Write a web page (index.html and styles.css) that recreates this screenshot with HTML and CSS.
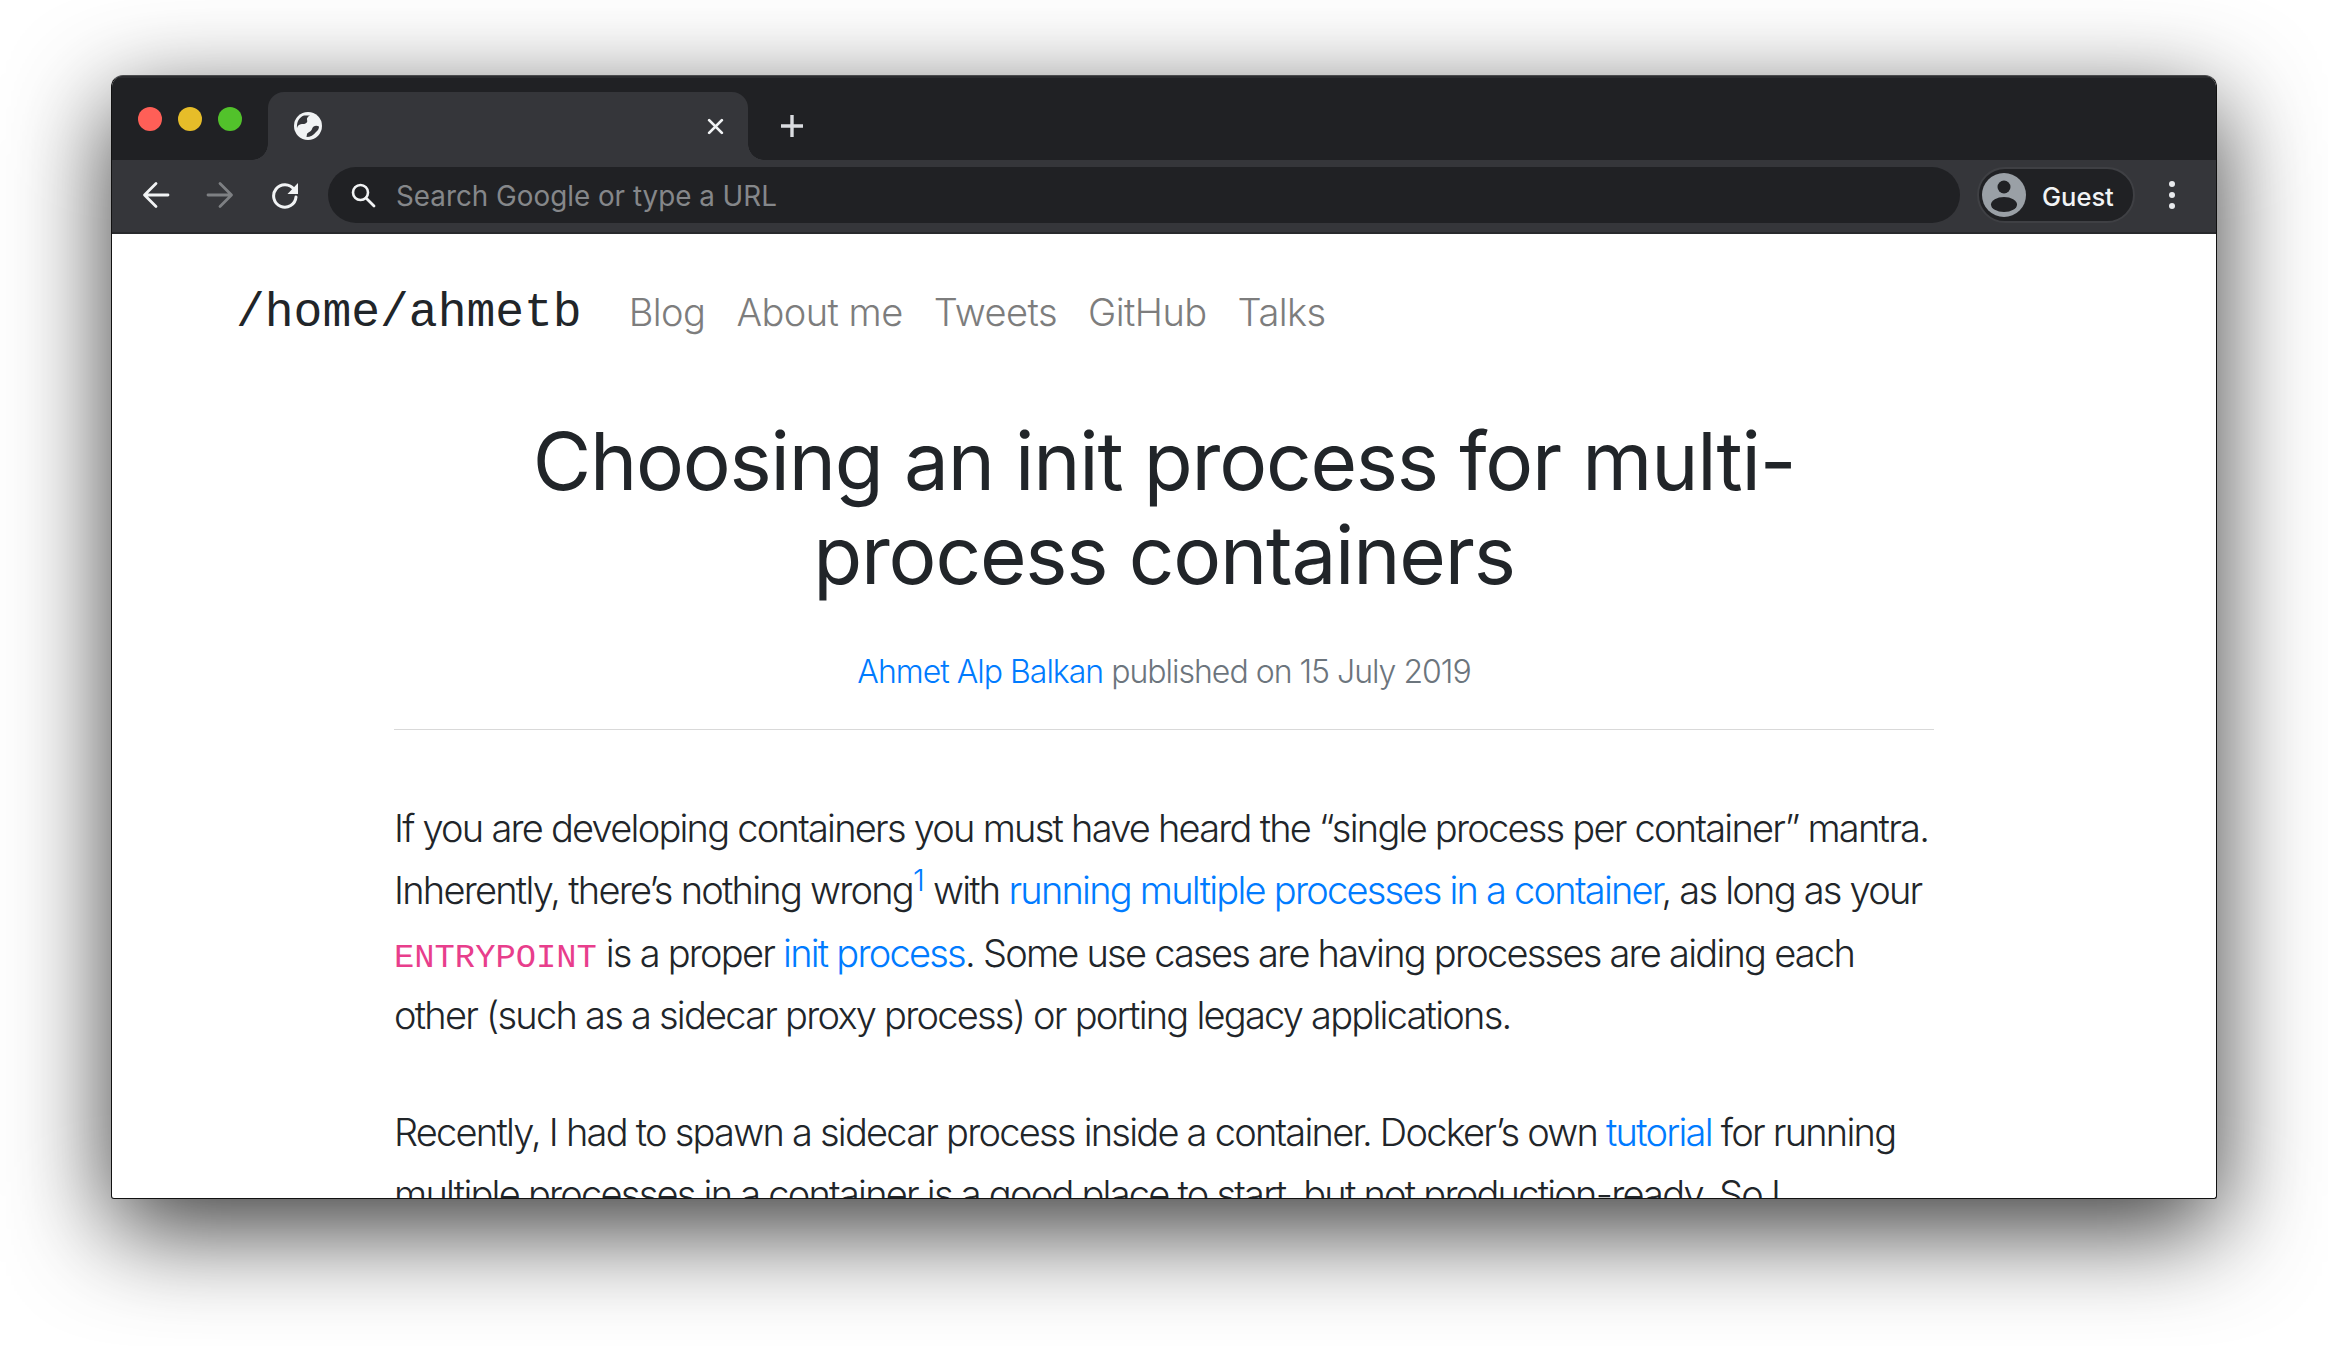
FILE: index.html
```html
<!DOCTYPE html>
<html lang="en">
<head>
<meta charset="utf-8">
<title>Choosing an init process for multi-process containers</title>
<link rel="stylesheet" href="styles.css">
</head>
<body>
<div class="window">
  <header class="tabstrip">
    <div class="lights">
      <span class="light red"></span><span class="light yellow"></span><span class="light green"></span>
    </div>
    <div class="tab">
      <svg class="globe" width="28" height="28" viewBox="0 0 28 28"><circle cx="14" cy="14" r="14" fill="#f1f3f4"/><path fill="#35363a" d="M3 16.500C3.500 13 6 12 9 12c3 0 5-2 4-4-.5-2 1-3.500 3-4.500l-6 0C5 5.500 2.500 10 3 16.500zM25 14.500c-3-1.500-6-.5-7 2.500-.5 2.500-4 3-5 5l-.5 3c3.500 0 7.500-2 9.500-5 2-1.500 3-3.500 3-5.500z"/></svg>
      <svg class="close" width="17" height="17" viewBox="0 0 16 16"><path stroke="#f1f3f4" stroke-width="2.600" stroke-linecap="round" d="M2 2l12 12M14 2L2 14"/></svg>
    </div>
    <svg class="plus" width="24" height="24" viewBox="0 0 24 24"><path stroke="#dadce0" stroke-width="3.400" d="M12 1v22M1 12h22"/></svg>
  </header>
  <nav class="toolbar">
    <svg class="tool first" width="30" height="30" viewBox="0 0 30 30"><path fill="none" stroke="#f1f3f4" stroke-width="2.800" stroke-linecap="round" stroke-linejoin="round" d="M27 15H4M15 3.500L3.500 15 15 26.500"/></svg>
    <svg class="tool" width="30" height="30" viewBox="0 0 30 30"><path fill="none" stroke="#7e8083" stroke-width="2.800" stroke-linecap="round" stroke-linejoin="round" d="M3 15h23M15 3.500L26.500 15 15 26.500"/></svg>
    <svg class="tool" width="30" height="30" viewBox="0 0 30 30"><path fill="none" stroke="#f1f3f4" stroke-width="3" stroke-linecap="round" d="M24 9.500A11.200 11.200 0 1 0 26 17"/><path fill="#f1f3f4" d="M28 3v11H17.500z"/></svg>
    <div class="omnibox">
      <svg width="26" height="26" viewBox="0 0 26 26"><circle cx="10.500" cy="10.500" r="7.500" fill="none" stroke="#f1f3f4" stroke-width="2.600"/><path stroke="#f1f3f4" stroke-width="2.800" stroke-linecap="round" d="M16 16l8 8"/></svg>
      <span class="placeholder">Search Google or type a URL</span>
    </div>
    <div class="profile">
      <svg width="44" height="44" viewBox="0 0 44 44"><circle cx="22" cy="22" r="22" fill="#9aa0a6"/><circle cx="22" cy="14" r="6.500" fill="#202124"/><ellipse cx="22" cy="31.500" rx="13" ry="7.500" fill="#202124"/></svg>
      <span class="guest">Guest</span>
    </div>
    <div class="menu"><span class="dot"></span><span class="dot"></span><span class="dot"></span></div>
  </nav>
  <main class="page">
    <div class="site">
      <a class="brand">/home/ahmetb</a>
      <a class="navlink">Blog</a>
      <a class="navlink">About me</a>
      <a class="navlink">Tweets</a>
      <a class="navlink">GitHub</a>
      <a class="navlink">Talks</a>
    </div>
    <article class="post">
      <h1 class="title">Choosing an init process for multi-<br>process containers</h1>
      <p class="meta"><a class="link">Ahmet Alp Balkan</a> published on 15 July 2019</p>
      <hr class="rule">
      <p class="para">If you are developing containers you must have heard the “single process per container” mantra.<br>Inherently, there’s nothing wrong<sup class="fn">1</sup> with <a class="link">running multiple processes in a container</a>, as long as your<br><code class="code">ENTRYPOINT</code> is a proper <a class="link">init process</a>. Some use cases are having processes are aiding each<br>other (such as a sidecar proxy process) or porting legacy applications.</p>
      <p class="para">Recently, I had to spawn a sidecar process inside a container. Docker’s own <a class="link">tutorial</a> for running<br>multiple processes in a container is a good place to start, but not production-ready. So I</p>
    </article>
  </main>
</div>
</body>
</html>
```
FILE: styles.css
```css
* { box-sizing: border-box; }
html, body { margin: 0; height: 100%; }
body {
  background: #fff;
  padding: 75px 111px 0;
  overflow: hidden;
  font-family: Inter, "Liberation Sans", sans-serif;
}
.window {
  width: 2106px;
  height: 1124px;
  display: flex;
  flex-direction: column;
  background: #fff;
  border: 1px solid #111;
  border-top-color: #4a4b4d;
  border-radius: 12px 12px 3px 3px;
  box-shadow: 0 30px 100px 0 rgba(0, 0, 0, .78);
  overflow: hidden;
}
.tabstrip {
  height: 84px;
  flex: none;
  background: #202124;
  border-top: 2px solid #2a2b2e;
  display: flex;
  align-items: flex-end;
  padding-left: 156px;
}
.lights {
  display: flex;
  gap: 16px;
  margin: 0 0 29px -130px;
  width: 130px;
  flex: none;
}
.light { width: 24px; height: 24px; border-radius: 50%; flex: none; }
.red { background: #ff5f57; }
.yellow { background: #e6bd29; }
.green { background: #52c22b; }
.tab {
  position: relative;
  width: 480px;
  height: 68px;
  background: #35363a;
  border-radius: 16px 16px 0 0;
  display: flex;
  align-items: center;
  justify-content: space-between;
  padding: 0 24px 0 26px;
  flex: none;
}
.tab::before, .tab::after {
  content: "";
  position: absolute;
  bottom: 0;
  width: 16px;
  height: 16px;
}
.tab::before { left: -16px; background: radial-gradient(circle at 0 0, transparent 15.500px, #35363a 16px); }
.tab::after { right: -16px; background: radial-gradient(circle at 100% 0, transparent 15.500px, #35363a 16px); }
.plus { margin: 0 0 22px 32px; flex: none; }
.toolbar {
  height: 74px;
  flex: none;
  background: #35363a;
  border-bottom: 2px solid #28292c;
  display: flex;
  align-items: center;
  padding: 0 0 2px 29px;
}
.tool { flex: none; margin-right: 35px; }
.tool.first { margin-right: 34px; }
.omnibox {
  width: 1632px;
  height: 56px;
  margin-left: -7px;
  border-radius: 28px;
  background: #202124;
  display: flex;
  align-items: center;
  padding-left: 22px;
  gap: 20px;
  flex: none;
}
.placeholder { font-size: 27.800px; color: #85878a; position: relative; top: 1px; }
.profile {
  width: 158px;
  height: 56px;
  margin-left: 17px;
  border-radius: 28px;
  background: #202124;
  border: 2px solid #3f4044;
  display: flex;
  align-items: center;
  gap: 16px;
  padding-left: 3px;
  flex: none;
}
.guest { font-size: 25.500px; font-weight: 500; color: #f1f3f4; position: relative; top: 1px; }
.menu {
  margin-left: 34px;
  display: flex;
  flex-direction: column;
  gap: 5px;
  flex: none;
}
.dot { width: 6px; height: 6px; border-radius: 50%; background: #e8eaed; }
.page { flex: 1; min-height: 0; overflow: hidden; color: #212529; }
.site {
  display: flex;
  align-items: baseline;
  padding: 52px 0 0 124px;
  height: 114px;
}
.brand {
  font-family: "Liberation Mono", monospace;
  font-size: 48px;
  color: #212529;
  margin-right: 47px;
}
.navlink {
  font-size: 38px;
  font-weight: 300;
  letter-spacing: -.55px;
  color: #7d7d7d;
  margin-right: 31px;
}
.post { width: 1540px; margin-left: 282px; }
.title {
  margin: 0;
  padding-top: 66px;
  font-size: 80px;
  line-height: 94px;
  font-weight: 400;
  letter-spacing: -1.200px;
  text-align: center;
  color: #212529;
}
.meta {
  margin: 46px 0 0;
  font-size: 32px;
  line-height: 48px;
  font-weight: 300;
  letter-spacing: -1px;
  color: #6c757d;
  text-align: center;
}
.rule { margin: 33px 0 0; border: 0; border-top: 1px solid #d9d9d9; }
.para {
  margin: 67px 0 55px;
  font-size: 38px;
  line-height: 62.300px;
  font-weight: 300;
  letter-spacing: -1.760px;
  white-space: nowrap;
  color: #212529;
}
.para + .para { margin-top: 55px; }
.link { color: #007bff; }
.fn { font-size: 30px; line-height: 0; color: #007bff; margin: 0 1px 0 0; }
.code {
  font-family: "Liberation Mono", monospace;
  font-size: 33.800px;
  line-height: 0;
  letter-spacing: 0;
  color: #e83e8c;
}
```
